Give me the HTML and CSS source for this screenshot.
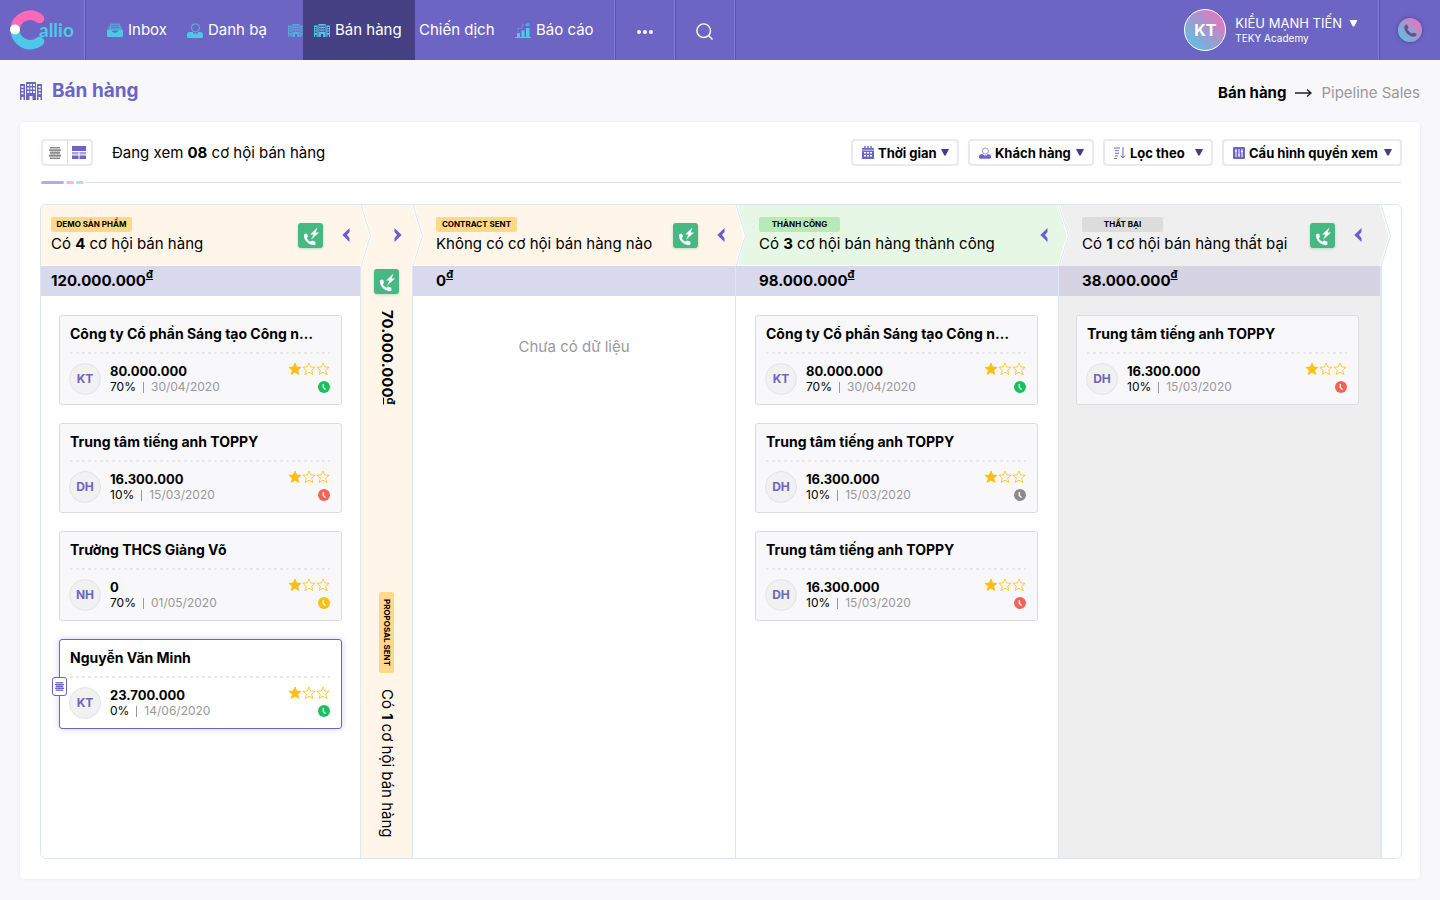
FILE: index.html
```html
<!DOCTYPE html>
<html lang="vi">
<head>
<meta charset="utf-8">
<meta name="viewport" content="width=device-width, initial-scale=1">
<title>Callio - Bán hàng</title>
<link rel="stylesheet" href="styles.css">
</head>
<body>
<svg class="sprite" aria-hidden="true">
  <symbol id="inbox" viewBox="0 0 16 14"><path d="M3.500.5h9L15.500 7v1H.5V7z" fill="#4cc9e8" opacity=".6"/><path d="M4.500 2.500h7M4 4.500h8" stroke="#5a78bd" stroke-width="1"/><path d="M0 7h4.500c.5 2 1.500 2.700 3.500 2.700S11 9 11.500 7H16v5.500q0 1.500-1.500 1.500h-13Q0 14 0 12.500z" fill="#4cc9e8"/></symbol>
  <symbol id="person" viewBox="0 0 16 15"><circle cx="8.500" cy="4.800" r="4" fill="none" stroke="currentColor" stroke-width="1.300" opacity=".7"/><path d="M0 12q0-3 3-3h2.500l1.800 2 1-1 1.200 1.300L11.500 9H13q3 0 3 3v1.500q0 1.500-1.500 1.500h-13Q0 15 0 13.500z" fill="currentColor"/></symbol>
  <symbol id="building" viewBox="0 0 22 18"><path fill="currentColor" fill-rule="evenodd" d="M6 0h10v18h-3.500v-4h-3v4H6zM7.300 2v2h2V2zM10.300 2v2h1.700V2zM13 2v2h2V2zM7.300 5.500v2h2v-2zM10.300 5.500v2h1.700v-2zM13 5.500v2h2v-2zM7.300 9v2h2V9zM10.300 9v2h1.700V9zM13 9v2h2V9zM0 2h5v16H3.500v-3h-2v3H0zM1.300 4v1.800h2.200V4zM1.300 7.200V9h2.200V7.200zM1.300 10.500v1.800h2.200v-1.800zM17 2h5v16h-1.500v-3h-2v3H17zM18.500 4v1.800h2.200V4zM18.500 7.200V9h2.200V7.200zM18.500 10.500v1.800h2.200v-1.800z"/></symbol>
  <symbol id="report" viewBox="0 0 16 16"><path d="M2 11h3v4H2zM6.500 8.500h3V15h-3zM11 6h3.500v9H11zM0 15h16v1H0z" fill="#4cc9e8"/><path d="M3 9.500v-3h4V3h5" fill="none" stroke="#4cc9e8" opacity=".6" stroke-dasharray="2 .7"/><circle cx="13" cy="2.500" r="1.800" fill="#4cc9e8" opacity=".7"/></symbol>
  <symbol id="handset" viewBox="0 0 16 16"><path fill="currentColor" d="M4.200 1.500 6 4.800 4.600 6.400c1 2.100 2.800 3.900 5 5l1.600-1.400 3.300 1.800c-.2 1.800-1.500 2.900-3.100 2.900C6.200 14.200 1.800 9.800 1.300 4.600c0-1.600 1.100-2.900 2.900-3.100z"/></symbol>
  <symbol id="autocall" viewBox="0 0 25 25"><path fill="#fff" d="M6.500 11 9 10.400l1 3.300-1.200 1.300c.8 1.700 1.900 2.900 3.700 3.700l1.500-1.200 3.400 1.200v2.800c-.4.500-.9.700-1.600.7C10.500 21.900 6 17.500 5.900 12.300c0-.6.200-1 .6-1.300zM19.500 4.500 12.300 11.500h3.200L13 16.800l8-7.300h-3.300z"/></symbol>
  <symbol id="chev" viewBox="0 0 8 14"><path fill="#6c5fc7" d="M7.500 0v4L5 7l2.500 3v4L.3 7z"/></symbol>
  <symbol id="caret" viewBox="0 0 8 7"><path fill="currentColor" d="M0 0h8L4.700 6.500H3.300z"/></symbol>
  <symbol id="star" viewBox="0 0 14 14"><path d="M7 .9 8.700 5l4.400.3-3.400 2.900 1.100 4.300L7 10.200l-3.800 2.300 1.100-4.300L.9 5.300 5.300 5z" stroke="#fdbf12" stroke-width=".8"/></symbol>
  <symbol id="clock" viewBox="0 0 12 12"><circle cx="6" cy="6" r="6" fill="currentColor"/><path d="M5.300 3v3.400l2.300 2.200" fill="none" stroke="#fff" stroke-width="1.300"/></symbol>
  <symbol id="rows" viewBox="0 0 12 12"><path fill="currentColor" opacity=".45" d="M1 0h10v12H1z"/><path fill="currentColor" fill-rule="evenodd" d="M1 0h10v1H1zM0 2.500h12v1.600H0zM1 5h10v1.500H1zM0 7.800h12v1.600H0zM1 11h10v1H1z"/></symbol>
  <symbol id="tip" viewBox="0 0 12 61"><path d="M0 0h1l9.500 30.500L1 61H0z" fill="currentColor"/><path d="M1 0l9 30.500L1 61" fill="none" stroke="#fff" stroke-width="2.500"/><path d="M1 0l9.500 30.500L1 61" fill="none" stroke="#d9e6f6" stroke-width="1"/></symbol>
</svg>

<header class="topbar">
  <a class="logo" href="#" aria-label="Callio">
    <svg width="40" height="42" viewBox="0 0 40 42"><path d="M5 20.500A15.200 15.200 0 0 1 29.500 9.500" fill="none" stroke="#ff69b8" stroke-width="9.500" stroke-linecap="round"/><path d="M5 20.500A15.200 15.200 0 0 0 29.500 32.500" fill="none" stroke="#4cc9ea" stroke-width="9.500" stroke-linecap="round"/><circle cx="5" cy="20.500" r="5" fill="#fff"/></svg>
    <span>allio</span>
  </a>
  <nav class="nav">
    <a class="nav-inbox" href="#"><svg width="16" height="14"><use href="#inbox"/></svg>Inbox</a>
    <a class="nav-contacts" href="#"><svg width="16" height="15"><use href="#person"/></svg>Danh bạ</a>
    <span class="nav-cut"><svg width="16" height="13"><use href="#building"/></svg></span>
    <a class="nav-sales" href="#" aria-current="page"><svg width="16" height="13"><use href="#building"/></svg>Bán hàng</a>
    <a class="nav-campaign" href="#">Chiến dịch</a>
    <a class="nav-report" href="#"><svg width="16" height="16"><use href="#report"/></svg>Báo cáo</a>
  </nav>
  <button class="top-btn" aria-label="Thêm"><svg width="16" height="4" viewBox="0 0 16 4"><g fill="#fff"><circle cx="2" cy="2" r="2"/><circle cx="8" cy="2" r="2"/><circle cx="14" cy="2" r="2"/></g></svg></button>
  <button class="top-btn" aria-label="Tìm kiếm"><svg width="17" height="17" viewBox="0 0 17 17" fill="none" stroke="#fff" stroke-width="1.400"><circle cx="7.700" cy="7.700" r="6.800"/><path d="m12.500 12.500 4 4"/></svg></button>
  <button class="user">
    <span class="user-avatar">KT</span>
    <span class="user-text"><span class="user-name">KIỀU MẠNH TIẾN<svg width="9" height="7"><use href="#caret"/></svg></span><span class="user-org">TEKY Academy</span></span>
  </button>
  <button class="dial" aria-label="Gọi"><span><svg width="15" height="15"><use href="#handset"/></svg></span></button>
</header>

<main class="page">
  <div class="page-head">
    <h1><svg width="22" height="18"><use href="#building"/></svg>Bán hàng</h1>
    <nav class="crumbs"><a href="#">Bán hàng</a><svg width="17" height="10" viewBox="0 0 17 10" fill="none" stroke="#222" stroke-width="1.400"><path d="M0 5h16M12 1.500 16 5l-4 3.500"/></svg><span>Pipeline Sales</span></nav>
  </div>

  <section class="panel">
    <div class="toolbar">
      <div class="views">
        <button aria-label="Danh sách"><svg width="12" height="12"><use href="#rows"/></svg></button>
        <button class="on" aria-label="Bảng"><svg width="14" height="13" viewBox="0 0 14 13"><path fill="#6c65c4" d="M0 0h14v5H0zM0 9.500h6.500V13H0zM7.500 9.500H14V13H7.500z"/><path fill="#a7a2dd" d="M0 6h6.500v2.500H0zM7.500 6H14v2.500H7.500z"/></svg></button>
      </div>
      <p class="summary">Đang xem <b>08</b> cơ hội bán hàng</p>
      <div class="filters">
        <label class="filter f-time"><svg width="12" height="13" viewBox="0 0 12 13"><path fill="#6c65c4" fill-rule="evenodd" d="M0 2h12v11H0zM2 6v1.500h2V6zM5 6v1.500h2V6zM8 6v1.500h2V6zM2 9v1.500h2V9zM5 9v1.500h2V9zM8 9v1.500h2V9z"/><path stroke="#6c65c4" stroke-width="1.400" d="M3 0v2M6 0v2M9 0v2"/><path stroke="#cfccef" d="M0 4.200h12"/></svg><select aria-label="Thời gian"><option>Thời gian</option></select><svg class="caret" width="8" height="7"><use href="#caret"/></svg></label>
        <label class="filter f-customer"><svg width="12" height="12"><use href="#person"/></svg><select aria-label="Khách hàng"><option>Khách hàng</option></select><svg class="caret" width="8" height="7"><use href="#caret"/></svg></label>
        <label class="filter f-sort"><svg width="12" height="12" viewBox="0 0 12 12" fill="none" stroke="#6c65c4"><path d="M0 1h6M1 3.700h4M1 6.300h4M1 9h3M0 11.500h3M9 0v11M6.800 8.500 9 11l2.200-2.500"/></svg><select aria-label="Lọc theo"><option>Lọc theo</option></select><svg class="caret" width="8" height="7"><use href="#caret"/></svg></label>
        <label class="filter f-config"><svg width="12" height="12" viewBox="0 0 12 12"><rect width="12" height="12" rx="1" fill="#6c65c4"/><path stroke="#fff" d="M3 2v8M6 2v8M9 2v8M2 4h2M5 8h2M8 4.500h2"/></svg><select aria-label="Cấu hình quyền xem"><option>Cấu hình quyền xem</option></select><svg class="caret" width="8" height="7"><use href="#caret"/></svg></label>
      </div>
    </div>
    <div class="rule"><i class="r1"></i><i class="r2"></i><i class="r3"></i><i class="r4"></i></div>

    <div class="board">
      <section class="col first demo">
        <header><div class="stage"><span class="tag">DEMO SẢN PHẨM</span><p>Có <b>4</b> cơ hội bán hàng</p></div><button class="call" aria-label="Gọi tự động"><svg width="25" height="25"><use href="#autocall"/></svg></button><button class="fold" aria-label="Thu gọn"><svg width="8" height="14"><use href="#chev"/></svg></button><svg class="tip"><use href="#tip"/></svg></header>
        <div class="sum">120.000.000<sup>đ</sup></div>
        <ul class="cards">
          <li class="card"><h2>Công ty Cổ phần Sáng tạo Công nghệ</h2><div class="info"><span class="who">KT</span><div class="deal"><strong>80.000.000</strong><p>70%<i></i><time>30/04/2020</time></p></div><div class="marks"><span class="stars"><svg><use href="#star"/></svg><svg><use href="#star"/></svg><svg><use href="#star"/></svg></span><svg class="clock green"><use href="#clock"/></svg></div></div></li>
          <li class="card"><h2>Trung tâm tiếng anh TOPPY</h2><div class="info"><span class="who">DH</span><div class="deal"><strong>16.300.000</strong><p>10%<i></i><time>15/03/2020</time></p></div><div class="marks"><span class="stars"><svg><use href="#star"/></svg><svg><use href="#star"/></svg><svg><use href="#star"/></svg></span><svg class="clock red"><use href="#clock"/></svg></div></div></li>
          <li class="card"><h2>Trường THCS Giảng Võ</h2><div class="info"><span class="who">NH</span><div class="deal"><strong>0</strong><p>70%<i></i><time>01/05/2020</time></p></div><div class="marks"><span class="stars"><svg><use href="#star"/></svg><svg><use href="#star"/></svg><svg><use href="#star"/></svg></span><svg class="clock yellow"><use href="#clock"/></svg></div></div></li>
          <li class="card active"><button class="grip" aria-label="Kéo"><svg width="9" height="9"><use href="#rows"/></svg></button><h2>Nguyễn Văn Minh</h2><div class="info"><span class="who">KT</span><div class="deal"><strong>23.700.000</strong><p>0%<i></i><time>14/06/2020</time></p></div><div class="marks"><span class="stars"><svg><use href="#star"/></svg><svg><use href="#star"/></svg><svg><use href="#star"/></svg></span><svg class="clock green"><use href="#clock"/></svg></div></div></li>
        </ul>
      </section>

      <section class="col slim">
        <header><button class="fold open" aria-label="Mở rộng"><svg width="8" height="14"><use href="#chev"/></svg></button><svg class="tip"><use href="#tip"/></svg></header>
        <div class="slim-body">
          <button class="call" aria-label="Gọi tự động"><svg width="25" height="25"><use href="#autocall"/></svg></button>
          <div class="slim-sum">70.000.000<sup>đ</sup></div>
          <span class="tag">PROPOSAL SENT</span>
          <p>Có <b>1</b> cơ hội bán hàng</p>
        </div>
      </section>

      <section class="col contract">
        <header><div class="stage"><span class="tag">CONTRACT SENT</span><p>Không có cơ hội bán hàng nào</p></div><button class="call" aria-label="Gọi tự động"><svg width="25" height="25"><use href="#autocall"/></svg></button><button class="fold" aria-label="Thu gọn"><svg width="8" height="14"><use href="#chev"/></svg></button><svg class="tip"><use href="#tip"/></svg></header>
        <div class="sum">0<sup>đ</sup></div>
        <p class="empty">Chưa có dữ liệu</p>
      </section>

      <section class="col won">
        <header><div class="stage"><span class="tag">THÀNH CÔNG</span><p>Có <b>3</b> cơ hội bán hàng thành công</p></div><button class="fold" aria-label="Thu gọn"><svg width="8" height="14"><use href="#chev"/></svg></button><svg class="tip"><use href="#tip"/></svg></header>
        <div class="sum">98.000.000<sup>đ</sup></div>
        <ul class="cards">
          <li class="card"><h2>Công ty Cổ phần Sáng tạo Công nghệ</h2><div class="info"><span class="who">KT</span><div class="deal"><strong>80.000.000</strong><p>70%<i></i><time>30/04/2020</time></p></div><div class="marks"><span class="stars"><svg><use href="#star"/></svg><svg><use href="#star"/></svg><svg><use href="#star"/></svg></span><svg class="clock green"><use href="#clock"/></svg></div></div></li>
          <li class="card"><h2>Trung tâm tiếng anh TOPPY</h2><div class="info"><span class="who">DH</span><div class="deal"><strong>16.300.000</strong><p>10%<i></i><time>15/03/2020</time></p></div><div class="marks"><span class="stars"><svg><use href="#star"/></svg><svg><use href="#star"/></svg><svg><use href="#star"/></svg></span><svg class="clock gray"><use href="#clock"/></svg></div></div></li>
          <li class="card"><h2>Trung tâm tiếng anh TOPPY</h2><div class="info"><span class="who">DH</span><div class="deal"><strong>16.300.000</strong><p>10%<i></i><time>15/03/2020</time></p></div><div class="marks"><span class="stars"><svg><use href="#star"/></svg><svg><use href="#star"/></svg><svg><use href="#star"/></svg></span><svg class="clock red"><use href="#clock"/></svg></div></div></li>
        </ul>
      </section>

      <section class="col lost">
        <header><div class="stage"><span class="tag">THẤT BẠI</span><p>Có <b>1</b> cơ hội bán hàng thất bại</p></div><button class="call" aria-label="Gọi tự động"><svg width="25" height="25"><use href="#autocall"/></svg></button><button class="fold" aria-label="Thu gọn"><svg width="8" height="14"><use href="#chev"/></svg></button><svg class="tip"><use href="#tip"/></svg></header>
        <div class="sum">38.000.000<sup>đ</sup></div>
        <ul class="cards">
          <li class="card"><h2>Trung tâm tiếng anh TOPPY</h2><div class="info"><span class="who">DH</span><div class="deal"><strong>16.300.000</strong><p>10%<i></i><time>15/03/2020</time></p></div><div class="marks"><span class="stars"><svg><use href="#star"/></svg><svg><use href="#star"/></svg><svg><use href="#star"/></svg></span><svg class="clock red"><use href="#clock"/></svg></div></div></li>
        </ul>
      </section>
    </div>
  </section>
</main>
</body>
</html>
```
FILE: styles.css
```css
* { box-sizing: border-box; }
body {
  margin: 0;
  min-height: 100vh;
  display: flex;
  flex-direction: column;
  background: #f8f8fb;
  color: #000;
  font: 15px/20px Inter, "Open Sans", sans-serif;
}
p, h1, h2, ul { margin: 0; padding: 0; }
ul { list-style: none; }
a { color: inherit; text-decoration: none; }
button, select { font: inherit; color: inherit; background: none; border: 0; padding: 0; margin: 0; cursor: pointer; }
svg { display: block; flex: none; }
.sprite { position: absolute; width: 0; height: 0; }

/* Top bar */
.topbar { display: flex; height: 60px; background: #6c65c4; color: #fff; white-space: nowrap; }
.logo { display: flex; align-items: center; width: 86px; padding-left: 10px; border-right: 1px solid #5a52b5; box-shadow: inset -1px 0 #837cd6; }
.logo span { margin-left: -11px; color: #4cc9ea; font: 700 19px/20px Lato, sans-serif; }
.nav { display: flex; width: 530px; border-right: 1px solid #5a52b5; box-shadow: inset -1px 0 #837cd6; }
.nav a, .nav-cut { display: flex; align-items: center; gap: 5px; flex: none; color: #fff; }
.nav svg { color: #4cc9e8; }
.nav-inbox { width: 101px; padding-left: 21px; }
.nav-contacts { width: 101px; }
.nav-cut { width: 15px; overflow: hidden; opacity: .7; }
.nav .nav-sales { width: 112px; padding-left: 11px; background: #454084; }
.nav-campaign { width: 100px; padding-left: 4px; }
.nav-report { width: 100px; }
.top-btn { display: flex; align-items: center; justify-content: center; width: 60px; border-right: 1px solid #5a52b5; box-shadow: inset -1px 0 #837cd6; padding: 3px 2px 0 0; }
.user { display: flex; align-items: center; gap: 9px; margin-left: auto; padding-right: 21px; text-align: left; border-right: 1px solid #5a52b5; box-shadow: inset -1px 0 #837cd6; }
.user-avatar { display: grid; place-items: center; width: 42px; height: 42px; border: 1px solid #fff; border-radius: 50%; background: linear-gradient(45deg, #4cc9ea, #9e9bd0 50%, #ff69b8); font-size: 16px; font-weight: 700; }
.user-text { display: flex; flex-direction: column; }
.user-name { display: flex; align-items: center; gap: 7px; font-size: 13px; line-height: 16px; }
.user-org { font-size: 10px; line-height: 14px; }
.dial { display: grid; place-items: center; width: 60px; }
.dial span { display: grid; place-items: center; width: 24px; height: 24px; border-radius: 50%; background: linear-gradient(45deg, #4cc9ea, #9e9bd0 50%, #ff69b8); color: #5b548f; box-shadow: 0 0 4px #4a4494; }

/* Page heading */
.page { flex: 1; display: flex; flex-direction: column; padding: 0 20px 21px; }
.page-head { display: flex; justify-content: space-between; height: 62px; align-items: center; }
h1 { display: flex; align-items: center; gap: 10px; color: #6c65c4; font-size: 19px; line-height: 24px; font-weight: 700; }
.crumbs { display: flex; align-items: center; gap: 9px; padding-top: 4px; color: #999; }
.crumbs a { color: #000; font-weight: 700; }

/* Panel */
.panel { flex: 1; display: flex; flex-direction: column; padding: 17px 18px 20px 20px; background: #fff; border-radius: 4px; box-shadow: 0 0 3px #e6e6ec; }
.toolbar { display: flex; align-items: center; height: 27px; }
.views { display: flex; width: 52px; height: 27px; margin-left: 1px; border: 2px solid #e9e8f7; border-radius: 4px; color: #8b8b8b; }
.views button { flex: 1; display: grid; place-items: center; }
.views .on { border-left: 1px solid #dcdaf2; }
.summary { margin-left: 19px; }
.filters { display: flex; gap: 9px; margin-left: auto; }
.filter { display: flex; align-items: center; height: 27px; padding: 0 8px 0 9px; gap: 4px; border: 2px solid #e9e8f7; border-radius: 4px; color: #6c65c4; }
.filter select { appearance: none; flex: 1; min-width: 0; color: #000; font-size: 13px; line-height: 20px; font-weight: 700; }
.filter .caret { color: #453d8c; }
.f-time { width: 108px; }
.f-customer { width: 126px; }
.f-sort { width: 110px; }
.f-config { width: 180px; }
.rule { display: flex; align-items: center; gap: 2px; height: 3px; margin: 15px 1px 20px; }
.rule i { height: 3px; border-radius: 2px; }
.r1 { width: 23px; background: #b4aee0; }
.r2 { width: 8px; background: #ffb4dc; }
.r3 { width: 8px; background: #a5e4f5; }
.rule .r4 { flex: 1; height: 1px; background: #e2e3e4; }

/* Board */
.board { flex: 1; display: grid; grid-template-columns: 320fr 52px 323fr 323fr 323fr 19px; border: 1px solid #d9e6f6; border-radius: 6px; }
.col { display: flex; flex-direction: column; min-width: 0; border-right: 1px solid #dce8f6; --tone: #fff6e9; --tag: #ffd98a; }
.won { --tone: #e6f7e5; --tag: #b8eab8; }
.lost { --tone: #efefef; --tag: #dcdcdc; background: #eeeeee; border-right: 2px solid #dfe8f4; }
.col header { position: relative; display: flex; align-items: center; height: 60px; padding: 0 10px 0 23px; background: var(--tone); white-space: nowrap; }
.col.first header { padding-left: 10px; border-radius: 6px 0 0 0; }
.col.lost header { padding-right: 18px; }
.stage { flex: 1; min-width: 0; padding-top: 2px; }
.stage p { line-height: 24px; }
.tag { display: block; width: 81px; height: 15px; border-radius: 2px; background: var(--tag); font-size: 8px; line-height: 15px; font-weight: 700; text-align: center; white-space: nowrap; }
.call { width: 25px; height: 25px; border-radius: 3px; background: #47b881; box-shadow: 0 1px 3px #bcd8c5; }
.fold { margin-left: 19px; }
.tip { position: absolute; z-index: 1; top: 0; right: -12px; width: 12px; height: 61px; color: var(--tone); }
.sum { height: 30px; margin-top: 1px; padding-left: 23px; background: #d9d9ed; font-size: 15px; line-height: 30px; font-weight: 700; }
.first .sum { padding-left: 10px; }
.lost .sum { background: #d6d4e3; }
sup { font-size: 11px; line-height: 0; vertical-align: 8px; text-decoration: underline; }
.empty { padding-top: 41px; color: #999; text-align: center; }

/* Collapsed column */
.slim { background: #fff6e9; }
.slim header { justify-content: flex-end; }
.fold.open { transform: rotate(180deg); margin: 0; }
.slim-body { flex: 1; display: flex; flex-direction: column; align-items: center; padding: 4px 0 20px; }
.slim-sum, .slim p, .slim .tag { writing-mode: vertical-rl; white-space: nowrap; }
.slim-sum { margin-top: 16px; font-size: 15px; font-weight: 700; }
.slim sup { vertical-align: 4px; }
.slim .tag { width: 15px; height: 81px; margin: auto 0 16px; }

/* Cards */
.cards { display: flex; flex-direction: column; gap: 18px; padding: 19px 20px 0 19px; }
.first .cards { padding: 19px 18px 0; }
.lost .cards { padding: 19px 21px 0 17px; }
.card { position: relative; height: 90px; padding: 8px 11px 0 10px; background: #f8f8fb; border: 1px solid #dcdcde; border-radius: 3px; }
.card h2 { margin-right: 10px; overflow: hidden; text-overflow: ellipsis; white-space: nowrap; font-size: 14px; line-height: 20px; font-weight: 700; }
.info { display: flex; margin-top: 8px; padding-top: 8px; background: repeating-linear-gradient(90deg, #e8e8eb 0 3px, transparent 3px 6px) top / 100% 2px no-repeat; }
.who { display: grid; place-items: center; width: 32px; height: 32px; margin: 3px 9px 0 -1px; border: 1px solid #e4e4e6; border-radius: 50%; background: #f1f1f2; color: #6c65c4; font-size: 12px; font-weight: 700; }
.deal { flex: 1; padding-top: 3px; }
.deal strong { display: block; font-size: 13px; line-height: 16px; }
.deal p { display: flex; align-items: center; gap: 7px; font-size: 12px; line-height: 16px; }
.deal i { width: 1px; height: 11px; background: #999; }
.deal time { color: #999; }
.marks { display: flex; flex-direction: column; align-items: flex-end; gap: 5px; padding-top: 2px; }
.stars { display: flex; }
.stars svg { width: 14px; height: 14px; fill: none; }
.stars svg:first-child { fill: #fdbf12; }
.clock { width: 12px; height: 12px; }
.green { color: #1cbf5c; }
.red { color: #f36457; }
.yellow { color: #fdbf12; }
.gray { color: #8b8b8b; }
.active { background: #fff; border-color: #6c65c4; box-shadow: 0 0 6px #cfccef; }
.grip { position: absolute; left: -8px; top: 37px; display: grid; place-items: center; width: 15px; height: 19px; background: #fff; border: 1px solid #6c65c4; border-radius: 3px; color: #6c65c4; }
```
